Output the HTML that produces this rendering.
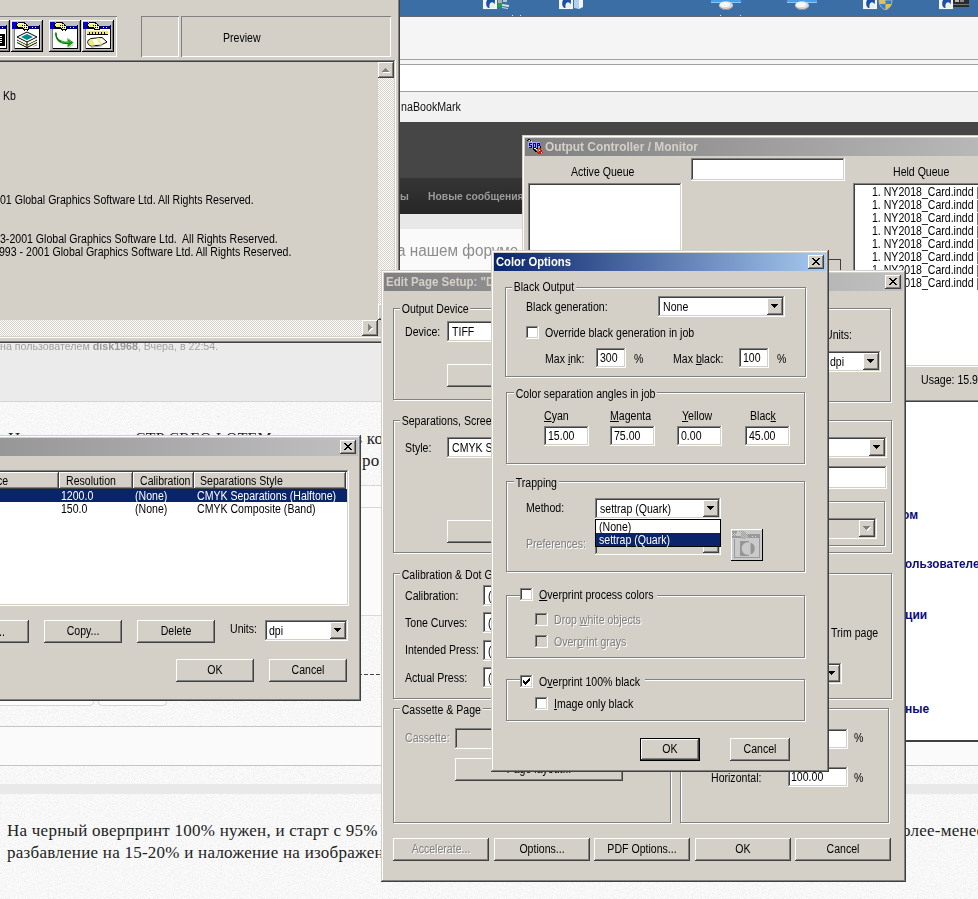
<!DOCTYPE html>
<html><head><meta charset="utf-8"><title>Color Options</title><style>
*{box-sizing:border-box}
html,body{margin:0;padding:0}
body{width:978px;height:899px;overflow:hidden;position:relative;background:#fcfcfc;font-family:"Liberation Sans",sans-serif;color:#000}
div,span,svg{position:absolute}
.t{white-space:nowrap;font:12.5px/13px "Liberation Sans",sans-serif;transform:scaleX(.845);transform-origin:0 0;-webkit-text-stroke:0}
.t u{text-decoration-thickness:1px;text-underline-offset:1px}
.tc{transform-origin:50% 0}
.dis{color:#808080;-webkit-text-stroke:0;text-shadow:1.2px 1px 0 #fff}
.face{background:#d4d0c8}
.win{background:#d4d0c8;box-shadow:inset -1px -1px #404040,inset 1px 1px #d4d0c8,inset -2px -2px #808080,inset 2px 2px #fff}
.btn{background:#d4d0c8;box-shadow:inset -1px -1px #404040,inset 1px 1px #fff,inset -2px -2px #808080,inset 2px 2px #d4d0c8}
.sunk{background:#fff;box-shadow:inset -1px -1px #fff,inset 1px 1px #808080,inset -2px -2px #d4d0c8,inset 2px 2px #404040}
.grp{border:1px solid #808080;box-shadow:1px 1px 0 #fff,inset 1px 1px 0 #fff}
.ttl{height:18px;color:#fff;overflow:hidden}
.ttl b{position:absolute;white-space:nowrap;font:bold 13px/18px "Liberation Sans",sans-serif;transform-origin:0 0;left:2px;top:0}
.act{background:linear-gradient(90deg,#0a246a,#a6caf0)}
.chk{width:13px;height:13px}
.sel{background:#0a246a}
.w{color:#fff;-webkit-text-stroke:0}
.ck{background:conic-gradient(#fff 25%,#d4d0c8 0 50%,#fff 0 75%,#d4d0c8 0) 0 0/2px 2px}
</style></head>
<body>
<svg style="left:0;top:0" width="978" height="899"><filter id="nz" x="0" y="0" width="100%" height="100%"><feTurbulence type="fractalNoise" baseFrequency=".75" numOctaves="2" seed="7"/><feColorMatrix values="0 0 0 0 0 0 0 0 0 0 0 0 0 0 0 .15 0 0 0 -.058"/></filter><rect width="978" height="899" filter="url(#nz)"/></svg>
<div style="left:400px;top:0px;width:578px;height:16px;background:#3a6ea5"></div>
<div style="left:400px;top:16px;width:578px;height:1px;background:#646a72"></div>
<div style="left:400px;top:17px;width:578px;height:105px;background:#f5f5f5"></div>
<div style="left:400px;top:59px;width:578px;height:1px;background:#a0a0a0"></div>
<div style="left:400px;top:64px;width:578px;height:1px;background:#a0a0a0"></div>
<div style="left:400px;top:65px;width:578px;height:26px;background:#fff"></div>
<div style="left:400px;top:91px;width:578px;height:1px;background:#a0a0a0"></div>
<div style="left:400px;top:92px;width:578px;height:30px;background:#f2f2f2"></div>
<div style="left:400px;top:122px;width:578px;height:56px;background:#464646"></div>
<div style="left:400px;top:178px;width:578px;height:36px;background:linear-gradient(#353535,#262626)"></div>
<div style="left:400px;top:214px;width:578px;height:15px;background:#e8e8e8"></div>
<div style="left:400px;top:229px;width:578px;height:60px;background:#fafafa"></div>
<span style="left:400.5px;top:101.14px;white-space:nowrap;font:normal 12px/12px 'Liberation Sans',sans-serif;color:#111;transform:scaleX(0.89);transform-origin:0 0;">naBookMark</span>
<span style="left:400px;top:191.27px;white-space:nowrap;font:bold 11.5px/11.5px 'Liberation Sans',sans-serif;color:#9b9b9b;transform:scaleX(0.9);transform-origin:0 0;">ы</span>
<span style="left:428px;top:191.27px;white-space:nowrap;font:bold 11.5px/11.5px 'Liberation Sans',sans-serif;color:#9b9b9b;transform:scaleX(0.9);transform-origin:0 0;">Новые сообщения</span>
<span style="left:397.3px;top:242.83px;white-space:nowrap;font:normal 15.8px/15.8px 'Liberation Sans',sans-serif;color:#8c8c8c;transform:scaleX(0.97);transform-origin:0 0;">а нашем форуме</span>
<svg style="left:483px;top:0" width="15" height="10"><rect width="14" height="9" fill="#f3f6f8"/><rect y="9" width="14.500" height="1" fill="#5d7896" opacity=".55"/><path d="M5.500 8C3 7 2.500 3 4 0h8l-.3 4.200-1.200-1.200C9 1.500 7.500 2.500 6.800 4 6.300 5.500 6.200 7 6.800 7.800z" fill="#1d4fa6"/><path d="M6.800 8c.2-2 1.500-4 3.800-4.500l1 1V8z" fill="#e4efe6"/></svg>
<svg style="left:497px;top:0" width="13" height="10"><rect x="1" y="0" width="4" height="3" fill="#9fb4a8"/><rect x="1" y="3" width="4" height="4" fill="#19a34a"/><path d="M5 4l7 1v2l-7-1zM5 7l6 1v1l-6-1z" fill="#d9dde0"/><path d="M6 0h4v2h-4z" fill="#b8c4cf"/></svg>
<svg style="left:559px;top:0" width="15" height="10"><rect width="14" height="9" fill="#f3f6f8"/><rect y="9" width="14.500" height="1" fill="#5d7896" opacity=".55"/><path d="M5.500 8C3 7 2.500 3 4 0h8l-.3 4.200-1.200-1.200C9 1.500 7.500 2.500 6.800 4 6.300 5.500 6.200 7 6.800 7.800z" fill="#1d4fa6"/><path d="M6.800 8c.2-2 1.500-4 3.800-4.500l1 1V8z" fill="#e4efe6"/></svg>
<svg style="left:573px;top:0" width="12" height="10"><path d="M1 0h5v9l-5-1z" fill="#b4d0f0"/><path d="M6 0h4v7l-4 2z" fill="#f2f6fb"/></svg>
<svg style="left:711px;top:0" width="30" height="11"><rect width="30" height="3" fill="#4aa0e8"/><rect y="2" width="30" height="1" fill="#8cc6f4"/><ellipse cx="15" cy="5.5" rx="7" ry="4.2" fill="#d8d8d8"/><ellipse cx="14" cy="4.5" rx="5" ry="2.6" fill="#f7f7f7"/><path d="M8.5 7a7 4 0 0 0 13 0" fill="none" stroke="#8a8f96" stroke-width="1"/></svg>
<svg style="left:787px;top:0" width="30" height="11"><rect width="30" height="3" fill="#4aa0e8"/><rect y="2" width="30" height="1" fill="#8cc6f4"/><ellipse cx="15" cy="5.5" rx="7" ry="4.2" fill="#d8d8d8"/><ellipse cx="14" cy="4.5" rx="5" ry="2.6" fill="#f7f7f7"/><path d="M8.5 7a7 4 0 0 0 13 0" fill="none" stroke="#8a8f96" stroke-width="1"/></svg>
<svg style="left:863px;top:0" width="15" height="10"><rect width="14" height="9" fill="#f3f6f8"/><rect y="9" width="14.500" height="1" fill="#5d7896" opacity=".55"/><path d="M5.500 8C3 7 2.500 3 4 0h8l-.3 4.200-1.200-1.200C9 1.500 7.500 2.500 6.800 4 6.300 5.500 6.200 7 6.800 7.800z" fill="#1d4fa6"/><path d="M6.800 8c.2-2 1.500-4 3.800-4.500l1 1V8z" fill="#e4efe6"/></svg>
<svg style="left:878px;top:0" width="15" height="10"><path d="M1 0h13c0 5-2 8-6.5 10C3 8 1 5 1 0z" fill="#e8c23a"/><path d="M7.5 0h6.5c0 1.500-.2 3-.6 4H7.500zM1.600 4h5.900v6C4 8.500 2.300 6.500 1.600 4z" fill="#2f7fd6"/><path d="M1 0h13c0 5-2 8-6.5 10C3 8 1 5 1 0z" fill="none" stroke="#b9bec4" stroke-width=".8"/></svg>
<svg style="left:939px;top:0" width="15" height="10"><rect width="14" height="9" fill="#f3f6f8"/><rect y="9" width="14.500" height="1" fill="#5d7896" opacity=".55"/><path d="M5.500 8C3 7 2.500 3 4 0h8l-.3 4.200-1.200-1.200C9 1.500 7.500 2.500 6.800 4 6.300 5.500 6.200 7 6.800 7.800z" fill="#1d4fa6"/><path d="M6.800 8c.2-2 1.500-4 3.800-4.500l1 1V8z" fill="#e4efe6"/></svg>
<svg style="left:953px;top:0" width="17" height="8"><rect width="16" height="7" fill="#2b2b2b"/><rect x="2" y="0" width="4" height="2" fill="#bdbdbd"/><rect x="7" y="0" width="4" height="2" fill="#8c8c8c"/><rect x="0" y="4" width="16" height="1" fill="#777"/></svg>
<div style="left:512px;top:15px;width:1px;height:1px;background:#e8eef5"></div>
<div style="left:520px;top:15px;width:1px;height:1px;background:#e8eef5"></div>
<div style="left:720px;top:15px;width:1px;height:1px;background:#e8eef5"></div>
<div style="left:740px;top:15px;width:1px;height:1px;background:#e8eef5"></div>
<div style="left:0px;top:343px;width:400px;height:58px;background:#ebebeb"></div>
<div style="left:0px;top:343px;width:400px;height:1px;background:#f1f1f4"></div>
<div style="left:0px;top:401px;width:400px;height:1px;background:#d4d4d4"></div>
<span style="left:0;top:339.5px;white-space:nowrap;font:11px/13px 'Liberation Sans',sans-serif;color:#a2a2a2;transform:scaleX(.97);transform-origin:0 0">на пользователем <b style="color:#9a9a9a">disk1968</b>, Вчера, в 22:54.</span>
<span style="left:8px;top:429.76px;white-space:nowrap;font:normal 17px/17px 'Liberation Serif',serif;color:#222;">Н</span>
<span style="left:135px;top:429.76px;white-space:nowrap;font:normal 17px/17px 'Liberation Serif',serif;color:#222;transform:scaleX(0.935);transform-origin:0 0;letter-spacing:.25px">CTP CREO LOTEM</span>
<span style="left:361px;top:429.76px;white-space:nowrap;font:normal 17px/17px 'Liberation Serif',serif;color:#222;letter-spacing:.25px;margin-left:-7px">в ко</span>
<span style="left:362px;top:451.76px;white-space:nowrap;font:normal 17px/17px 'Liberation Serif',serif;color:#222;letter-spacing:.25px">ро</span>
<div style="left:340px;top:485px;width:60px;height:131px;background:#fbfbfb;border-top:1px solid #d6d6d6;border-bottom:1px solid #dadada"></div>
<div style="left:340px;top:507px;width:60px;height:1px;background:#d6d6d6"></div>
<div style="left:340px;top:674px;width:41px;height:1px;background:repeating-linear-gradient(90deg,#444 0 4px,transparent 4px 6px)"></div>
<div style="left:-5px;top:690px;width:99px;height:16px;background:#fcfcfc;border:1px solid #d5d5d5;border-radius:4px"></div>
<div style="left:98px;top:690px;width:69px;height:16px;background:#fcfcfc;border:1px solid #d5d5d5;border-radius:4px"></div>
<div style="left:0px;top:726px;width:978px;height:40px;background:#fafafa;border-top:1px solid #c4c4c4;border-bottom:1px solid #c4c4c4"></div>
<div style="left:0px;top:784px;width:978px;height:10px;background:#e9e9e9"></div>
<span style="left:7px;top:821.76px;white-space:nowrap;font:normal 17px/17px 'Liberation Serif',serif;color:#222;letter-spacing:.25px">На черный оверпринт 100% нужен, и старт с 95% К</span>
<span style="left:7px;top:844.26px;white-space:nowrap;font:normal 17px/17px 'Liberation Serif',serif;color:#222;letter-spacing:.25px">разбавление на 15-20% и наложение на изображение</span>
<span style="left:893px;top:821.76px;white-space:nowrap;font:normal 17px/17px 'Liberation Serif',serif;color:#222;letter-spacing:.25px">более-менее</span>
<div class="win" style="left:-10px;top:-30px;width:410px;height:373px;"></div>
<div style="left:-10px;top:16px;width:127px;height:41px;box-shadow:inset 1px 1px #808080,inset -1px -1px #fff"></div>
<div style="left:141px;top:16px;width:38px;height:41px;box-shadow:inset 1px 1px #808080,inset -1px -1px #fff"></div>
<div style="left:181px;top:16px;width:210px;height:41px;box-shadow:inset 1px 1px #808080,inset -1px -1px #fff"></div>
<span class="t " style="left:223px;top:32px;">Preview</span>
<svg style="left:-22px;top:20px" width="32" height="32" shape-rendering="crispEdges"><defs><pattern id="hz" width="2" height="2" patternUnits="userSpaceOnUse"><rect width="2" height="2" fill="#f4f080"/><rect width="1" height="1" fill="#fff"/><rect x="1" y="1" width="1" height="1" fill="#000"/></pattern></defs><rect width="32" height="32" fill="#c0c0c0"/><path d="M0 0h31v1h-30v30h-1z" fill="#fff"/><path d="M31 0h1v32h-32v-1h31z" fill="#000"/><path d="M30 1h1v30h-30v-1h29z" fill="#808080"/><rect x="4" y="9" width="24" height="19" fill="#fff"/><path d="M28 5h1v24h-25v-1h24z" fill="#000"/><path d="M3 9h1v20h-1z" fill="#808080"/><rect x="1" y="2" width="5" height="7" fill="#0000d0"/><rect x="6" y="6" width="22" height="3" fill="#000080"/><rect x="21" y="7" width="1" height="1" fill="#fff"/><rect x="24" y="7" width="1" height="1" fill="#fff"/><path d="M5 4l2-2h6l2 2 2 2 1 2v2h-1v1h-1v-1h-2l-1 1-1-1-1-1h-5l-1-1z" fill="#000"/><path d="M6 4l1-1h5l1 1-1 3h-5l-1-1z" fill="#f4f080"/><path d="M7 3h4v1h-4z" fill="#fffbd0"/><path d="M12 3h2l3 4v2h-3l-3-2z" fill="url(#hz)"/><rect x="20" y="14" width="7" height="12" fill="#000"/><path d="M20 16h4v1h-4zM20 18h4v1h-4zM20 20h4v1h-4zM20 22h4v1h-4z" fill="#fff"/></svg>
<svg style="left:11px;top:20px" width="32" height="32" shape-rendering="crispEdges"><defs><pattern id="hz" width="2" height="2" patternUnits="userSpaceOnUse"><rect width="2" height="2" fill="#f4f080"/><rect width="1" height="1" fill="#fff"/><rect x="1" y="1" width="1" height="1" fill="#000"/></pattern></defs><rect width="32" height="32" fill="#c0c0c0"/><path d="M0 0h31v1h-30v30h-1z" fill="#fff"/><path d="M31 0h1v32h-32v-1h31z" fill="#000"/><path d="M30 1h1v30h-30v-1h29z" fill="#808080"/><rect x="4" y="9" width="24" height="19" fill="#fff"/><path d="M28 5h1v24h-25v-1h24z" fill="#000"/><path d="M3 9h1v20h-1z" fill="#808080"/><rect x="1" y="2" width="5" height="7" fill="#0000d0"/><rect x="6" y="6" width="22" height="3" fill="#000080"/><rect x="21" y="7" width="1" height="1" fill="#fff"/><rect x="24" y="7" width="1" height="1" fill="#fff"/><path d="M5 4l2-2h6l2 2 2 2 1 2v2h-1v1h-1v-1h-2l-1 1-1-1-1-1h-5l-1-1z" fill="#000"/><path d="M6 4l1-1h5l1 1-1 3h-5l-1-1z" fill="#f4f080"/><path d="M7 3h4v1h-4z" fill="#fffbd0"/><path d="M12 3h2l3 4v2h-3l-3-2z" fill="url(#hz)"/><g shape-rendering="auto"><path d="M6 17l10-5 10 5-10 5z" fill="#fff" stroke="#000"/><path d="M6 20l10 5 10-5" fill="none" stroke="#000"/><path d="M6 22.500l10 5 10-5" fill="none" stroke="#000"/><path d="M7 18.500l9 4.500 9-4.500v1.500l-9 4.500-9-4.500z" fill="#fff"/><path d="M7 21l9 4.500 9-4.500v1l-9 4.500-9-4.500z" fill="#f0ec70"/><path d="M10 17l6-3 6 3-6 3z" fill="#008c8c"/><path d="M16 22v6" stroke="#000"/><path d="M21 27l5-1v-2z" fill="#b0b0b0"/></g></svg>
<svg style="left:49px;top:20px" width="32" height="32" shape-rendering="crispEdges"><defs><pattern id="hz" width="2" height="2" patternUnits="userSpaceOnUse"><rect width="2" height="2" fill="#f4f080"/><rect width="1" height="1" fill="#fff"/><rect x="1" y="1" width="1" height="1" fill="#000"/></pattern></defs><rect width="32" height="32" fill="#c0c0c0"/><path d="M0 0h31v1h-30v30h-1z" fill="#fff"/><path d="M31 0h1v32h-32v-1h31z" fill="#000"/><path d="M30 1h1v30h-30v-1h29z" fill="#808080"/><rect x="4" y="9" width="24" height="19" fill="#fff"/><path d="M28 5h1v24h-25v-1h24z" fill="#000"/><path d="M3 9h1v20h-1z" fill="#808080"/><rect x="1" y="2" width="5" height="7" fill="#0000d0"/><rect x="6" y="6" width="22" height="3" fill="#000080"/><rect x="21" y="7" width="1" height="1" fill="#fff"/><rect x="24" y="7" width="1" height="1" fill="#fff"/><path d="M5 4l2-2h6l2 2 2 2 1 2v2h-1v1h-1v-1h-2l-1 1-1-1-1-1h-5l-1-1z" fill="#000"/><path d="M6 4l1-1h5l1 1-1 3h-5l-1-1z" fill="#f4f080"/><path d="M7 3h4v1h-4z" fill="#fffbd0"/><path d="M12 3h2l3 4v2h-3l-3-2z" fill="url(#hz)"/><g shape-rendering="auto"><path d="M7.500 12.500c0 6.500 4 9 11 9v-3.500l6 4.500-6 5V24c-9 0-12.500-4.500-12.500-11.500z" fill="#109a10"/><path d="M7 13c0 7 4 10.500 11.500 10.500" fill="none" stroke="#086808" stroke-width="1"/><path d="M12.500 22h8M19.500 19.500l3 2.500" stroke="#a8f0a8" stroke-width="1" stroke-dasharray="1 1"/><path d="M19 27.500l5-3.500 1 1-5 3z" fill="#c8c8c8"/></g></svg>
<svg style="left:82px;top:20px" width="32" height="32" shape-rendering="crispEdges"><defs><pattern id="hz" width="2" height="2" patternUnits="userSpaceOnUse"><rect width="2" height="2" fill="#f4f080"/><rect width="1" height="1" fill="#fff"/><rect x="1" y="1" width="1" height="1" fill="#000"/></pattern></defs><rect width="32" height="32" fill="#c0c0c0"/><path d="M0 0h31v1h-30v30h-1z" fill="#fff"/><path d="M31 0h1v32h-32v-1h31z" fill="#000"/><path d="M30 1h1v30h-30v-1h29z" fill="#808080"/><rect x="4" y="9" width="24" height="19" fill="#fff"/><path d="M28 5h1v24h-25v-1h24z" fill="#000"/><path d="M3 9h1v20h-1z" fill="#808080"/><rect x="1" y="2" width="5" height="7" fill="#0000d0"/><rect x="6" y="6" width="22" height="3" fill="#000080"/><rect x="21" y="7" width="1" height="1" fill="#fff"/><rect x="24" y="7" width="1" height="1" fill="#fff"/><path d="M5 4l2-2h6l2 2 2 2 1 2v2h-1v1h-1v-1h-2l-1 1-1-1-1-1h-5l-1-1z" fill="#000"/><path d="M6 4l1-1h5l1 1-1 3h-5l-1-1z" fill="#f4f080"/><path d="M7 3h4v1h-4z" fill="#fffbd0"/><path d="M12 3h2l3 4v2h-3l-3-2z" fill="url(#hz)"/><rect x="5" y="10" width="21" height="5" fill="#f4ec50"/><path d="M5 10h21v1h-21z" fill="#fffbd0"/><path d="M5 14h21v1h-21z" fill="#000"/><path d="M7 12h1v2h-1zM10 12h1v2h-1zM13 12h1v2h-1zM16 12h1v2h-1zM19 12h1v2h-1zM22 12h1v2h-1z" fill="#000"/><g shape-rendering="auto"><path d="M6 20.500L9 18.500 20 17.500 25 22 19 25 10 26C7 26 5 23.500 6 20.500z" fill="#fff" stroke="#000" stroke-width="1"/><path d="M7 20l3-1.200 3 6.500-3.500.4c-2-.5-3-3-2.500-5.700z" fill="#f0ec70"/><path d="M14.500 18.300l3-.3 3 6.200-3 .8z" fill="#f4f08a"/><path d="M9 27.300l11-1.500" stroke="#a0a0a0"/></g></svg>
<div class="sunk" style="left:-10px;top:60px;width:406px;height:278px;background:#d4d0c8"></div>
<span class="t " style="left:3px;top:90px;">Kb</span>
<span class="t " style="left:0px;top:194px;margin-left:-0.5px">01 Global Graphics Software Ltd. All Rights Reserved.</span>
<span class="t " style="left:0px;top:233px;">3-2001 Global Graphics Software Ltd.&nbsp; All Rights Reserved.</span>
<span class="t " style="left:0px;top:246px;margin-left:-1px">993 - 2001 Global Graphics Software Ltd. All Rights Reserved.</span>
<div class="ck" style="left:378px;top:62px;width:16px;height:258px;"></div>
<div class="btn" style="left:378px;top:62px;width:16px;height:16px;"></div>
<div class="btn" style="left:378px;top:304px;width:16px;height:16px;"></div>
<svg style="left:383px;top:69px" width="7" height="4" shape-rendering="crispEdges"><path d="M3 0h1v1h-1zM2 1h3v1h-3zM1 2h5v1h-5zM0 3h7v1h-7z" fill="#fff"/></svg>
<svg style="left:382px;top:68px" width="7" height="4" shape-rendering="crispEdges"><path d="M3 0h1v1h-1zM2 1h3v1h-3zM1 2h5v1h-5zM0 3h7v1h-7z" fill="#808080"/></svg>
<svg style="left:383px;top:311px" width="7" height="4" shape-rendering="crispEdges"><path d="M0 0h7v1h-7zM1 1h5v1h-5zM2 2h3v1h-3zM3 3h1v1h-1z" fill="#fff"/></svg>
<svg style="left:382px;top:310px" width="7" height="4" shape-rendering="crispEdges"><path d="M0 0h7v1h-7zM1 1h5v1h-5zM2 2h3v1h-3zM3 3h1v1h-1z" fill="#808080"/></svg>
<div class="ck" style="left:-10px;top:320px;width:388px;height:16px;"></div>
<div class="btn" style="left:362px;top:320px;width:16px;height:16px;"></div>
<svg style="left:369px;top:325px" width="4" height="7" shape-rendering="crispEdges"><path d="M0 0h1v7h-1zM1 1h1v5h-1zM2 2h1v3h-1zM3 3h1v1h-1z" fill="#fff"/></svg>
<svg style="left:368px;top:324px" width="4" height="7" shape-rendering="crispEdges"><path d="M0 0h1v7h-1zM1 1h1v5h-1zM2 2h1v3h-1zM3 3h1v1h-1z" fill="#808080"/></svg>
<div class="face" style="left:378px;top:320px;width:16px;height:16px;"></div>
<div class="win" style="left:522px;top:135px;width:480px;height:267px;"></div>
<div class="ttl" style="left:525px;top:138px;width:475px;background:linear-gradient(90deg,#808080,#c0c0c0 520px);color:#d4d0c8"><b style="left:20px;transform:scaleX(.917)">Output Controller / Monitor</b></div>
<svg style="left:527px;top:139px" width="16" height="16" shape-rendering="crispEdges"><path d="M1 0h2v1h-2zM0 1h1v1h-1zM3 1h1v1h1v1h-1v-1h-1z" fill="#000"/><path d="M2 1h1v1h-1zM4 2h1v1h1v1h-1z" fill="#fff"/><rect x="1" y="3" width="12" height="6" fill="#a8a8f0"/><path d="M2 4h3v1h-2v1h2v3h-3v-1h2v-1h-2zM6 4h3v5h-3zM10 4h3v3h-2v2h-1z" fill="#0000c0"/><rect x="7" y="5" width="1" height="3" fill="#a8a8f0"/><rect x="11" y="5" width="1" height="1" fill="#a8a8f0"/><path d="M6 9h1v1h1v1h1v1h1v1h-2v-1h-1v-1h-1zM13 7h1v2h-1zM9 9h2v1h-2z" fill="#000"/><path d="M7 9h2v1h1v1h-1v-1h-2z" fill="#fff"/><path d="M12 9h2v2h1v2h1v1h-2v1h-3v-1h-1v-1h2v-2h1z" fill="#e01010"/><rect x="12" y="11" width="1" height="1" fill="#f8e060"/><rect x="14" y="13" width="1" height="1" fill="#fff"/></svg>
<span class="t " style="left:571px;top:166px;">Active Queue</span>
<div class="sunk" style="left:528px;top:183px;width:154px;height:184px;"></div>
<div class="sunk" style="left:691px;top:158px;width:154px;height:23px;"></div>
<span class="t " style="left:893px;top:166px;">Held Queue</span>
<div class="sunk" style="left:853px;top:183px;width:140px;height:184px;"></div>
<span class="t " style="left:872px;top:186px;margin-left:-.5px">1. NY2018_Card.indd&nbsp;|</span>
<span class="t " style="left:872px;top:199px;margin-left:-.5px">1. NY2018_Card.indd&nbsp;|</span>
<span class="t " style="left:872px;top:212px;margin-left:-.5px">1. NY2018_Card.indd&nbsp;|</span>
<span class="t " style="left:872px;top:225px;margin-left:-.5px">1. NY2018_Card.indd&nbsp;|</span>
<span class="t " style="left:872px;top:238px;margin-left:-.5px">1. NY2018_Card.indd&nbsp;|</span>
<span class="t " style="left:872px;top:251px;margin-left:-.5px">1. NY2018_Card.indd&nbsp;|</span>
<span class="t " style="left:872px;top:264px;margin-left:-.5px">1. NY2018_Card.indd&nbsp;|</span>
<span class="t " style="left:872px;top:277px;margin-left:-.5px">1. NY2018_Card.indd&nbsp;|</span>
<div style="left:700px;top:259px;width:141px;height:60px;border:1px solid #404040"></div>
<span class="t " style="left:921px;top:374px;">Usage: 15.9%</span>
<div style="left:880px;top:402px;width:110px;height:340px;background:#fff;border-bottom:2px solid #404040"></div>
<span style="left:902px;top:508.64px;white-space:nowrap;font:bold 12px/12px 'Liberation Sans',sans-serif;color:#0c0c7c;">ом</span>
<span style="left:905px;top:558.24px;white-space:nowrap;font:bold 12px/12px 'Liberation Sans',sans-serif;color:#0c0c7c;transform:scaleX(0.985);transform-origin:0 0;">ользователей</span>
<span style="left:905px;top:608.64px;white-space:nowrap;font:bold 12px/12px 'Liberation Sans',sans-serif;color:#0c0c7c;">ции</span>
<span style="left:905px;top:702.64px;white-space:nowrap;font:bold 12px/12px 'Liberation Sans',sans-serif;color:#0c0c7c;">ные</span>
<div class="win" style="left:-200px;top:435px;width:561px;height:266px;"></div>
<div class="ttl" style="left:-197px;top:438px;width:555px;background:linear-gradient(90deg,#808080,#c0c0c0)"></div>
<div class="btn" style="left:340px;top:440px;width:16px;height:14px;"></div>
<svg style="left:344px;top:443px" width="8" height="7" shape-rendering="crispEdges"><path d="M0 0h2v1h-2zM6 0h2v1h-2zM1 1h2v1h-2zM5 1h2v1h-2zM2 2h4v1h-4zM3 3h2v1h-2zM2 4h4v1h-4zM1 5h2v1h-2zM5 5h2v1h-2zM0 6h2v1h-2zM6 6h2v1h-2z" fill="#000"/></svg>
<div class="sunk" style="left:-190px;top:470px;width:539px;height:136px;"></div>
<div style="left:-188px;top:472px;width:247px;height:17px;background:#d4d0c8;box-shadow:inset -1px -1px #404040,inset 1px 1px #fff,inset -2px -2px #808080"></div>
<span class="t " style="left:-3.5px;top:475px;">ce</span>
<div style="left:59px;top:472px;width:74px;height:17px;background:#d4d0c8;box-shadow:inset -1px -1px #404040,inset 1px 1px #fff,inset -2px -2px #808080"></div>
<span class="t " style="left:66px;top:475px;">Resolution</span>
<div style="left:133px;top:472px;width:61px;height:17px;background:#d4d0c8;box-shadow:inset -1px -1px #404040,inset 1px 1px #fff,inset -2px -2px #808080"></div>
<span class="t " style="left:140px;top:475px;">Calibration</span>
<div style="left:194px;top:472px;width:152px;height:17px;background:#d4d0c8;box-shadow:inset -1px -1px #404040,inset 1px 1px #fff,inset -2px -2px #808080"></div>
<span class="t " style="left:200px;top:475px;">Separations Style</span>
<div class="sel" style="left:-188px;top:489px;width:535px;height:13px;"></div>
<span class="t w" style="left:62px;top:490px;margin-left:-1px">1200.0</span>
<span class="t w" style="left:135px;top:490px;">(None)</span>
<span class="t w" style="left:197px;top:490px;margin-left:-.5px">CMYK Separations (Halftone)</span>
<span class="t " style="left:62px;top:503px;margin-left:-1px">150.0</span>
<span class="t " style="left:135px;top:503px;">(None)</span>
<span class="t " style="left:197px;top:503px;margin-left:-.5px">CMYK Composite (Band)</span>
<div class="btn" style="left:-49px;top:620px;width:78px;height:23px;"></div>
<span class="t " style="left:-1px;top:626px;">..</span>
<div class="btn" style="left:44px;top:620px;width:78px;height:23px;"></div>
<span class="t tc " style="left:44px;width:78px;text-align:center;top:625px;">Copy...</span>
<div class="btn" style="left:137px;top:620px;width:78px;height:23px;"></div>
<span class="t tc " style="left:137px;width:78px;text-align:center;top:625px;">Delete</span>
<span class="t " style="left:230px;top:623px;">Units:</span>
<div class="sunk" style="left:265px;top:620px;width:83px;height:21px;background:#fff"></div>
<div class="btn" style="left:330px;top:622px;width:16px;height:17px;"></div>
<svg style="left:334px;top:628px" width="7" height="4" shape-rendering="crispEdges"><path d="M0 0h7v1h-7zM1 1h5v1h-5zM2 2h3v1h-3zM3 3h1v1h-1z" fill="#000"/></svg>
<span class="t " style="left:269px;top:625px;">dpi</span>
<div class="btn" style="left:176px;top:659px;width:78px;height:23px;"></div>
<span class="t tc " style="left:176px;width:78px;text-align:center;top:664px;">OK</span>
<div class="btn" style="left:269px;top:659px;width:78px;height:23px;"></div>
<span class="t tc " style="left:269px;width:78px;text-align:center;top:664px;">Cancel</span>
<div class="win" style="left:381px;top:270px;width:525px;height:612px;"></div>
<div class="ttl" style="left:384px;top:273px;width:519px;background:linear-gradient(90deg,#808080,#c0c0c0);color:#d4d0c8"><b style="left:2px;transform:scaleX(.885)">Edit Page Setup: "Default Page Setup"</b></div>
<div class="btn" style="left:885px;top:275px;width:16px;height:14px;"></div>
<svg style="left:889px;top:278px" width="8" height="7" shape-rendering="crispEdges"><path d="M0 0h2v1h-2zM6 0h2v1h-2zM1 1h2v1h-2zM5 1h2v1h-2zM2 2h4v1h-4zM3 3h2v1h-2zM2 4h4v1h-4zM1 5h2v1h-2zM5 5h2v1h-2zM0 6h2v1h-2zM6 6h2v1h-2z" fill="#000"/></svg>
<div class="grp" style="left:393px;top:308px;width:299px;height:92px;"></div>
<span class="t " style="left:402px;top:303px;background:#d4d0c8;padding:0 2px;margin-left:-1.7px">Output Device</span>
<div class="grp" style="left:700px;top:308px;width:191px;height:94px;"></div>
<span class="t " style="left:405px;top:326px;">Device:</span>
<div class="sunk" style="left:447px;top:321px;width:200px;height:21px;background:#fff"></div>
<div class="btn" style="left:629px;top:323px;width:16px;height:17px;"></div>
<svg style="left:633px;top:329px" width="7" height="4" shape-rendering="crispEdges"><path d="M0 0h7v1h-7zM1 1h5v1h-5zM2 2h3v1h-3zM3 3h1v1h-1z" fill="#000"/></svg>
<span class="t " style="left:452px;top:326px;">TIFF</span>
<div class="btn" style="left:447px;top:364px;width:180px;height:23px;"></div>
<span class="t " style="left:825px;top:329px;">Units:</span>
<div class="sunk" style="left:825px;top:351px;width:56px;height:21px;background:#fff"></div>
<div class="btn" style="left:863px;top:353px;width:16px;height:17px;"></div>
<svg style="left:867px;top:359px" width="7" height="4" shape-rendering="crispEdges"><path d="M0 0h7v1h-7zM1 1h5v1h-5zM2 2h3v1h-3zM3 3h1v1h-1z" fill="#000"/></svg>
<span class="t " style="left:830px;top:356px;">dpi</span>
<div class="grp" style="left:393px;top:420px;width:499px;height:133px;"></div>
<span class="t " style="left:402px;top:415px;background:#d4d0c8;padding:0 2px;margin-left:-1.7px">Separations, Screening &amp; Color</span>
<span class="t " style="left:405px;top:442px;">Style:</span>
<div class="sunk" style="left:447px;top:437px;width:440px;height:21px;background:#fff"></div>
<div class="btn" style="left:869px;top:439px;width:16px;height:17px;"></div>
<svg style="left:873px;top:445px" width="7" height="4" shape-rendering="crispEdges"><path d="M0 0h7v1h-7zM1 1h5v1h-5zM2 2h3v1h-3zM3 3h1v1h-1z" fill="#000"/></svg>
<span class="t " style="left:452px;top:442px;">CMYK Separations (Halftone)</span>
<div class="sunk" style="left:600px;top:466px;width:287px;height:23px;"></div>
<div class="btn" style="left:447px;top:520px;width:180px;height:23px;"></div>
<div class="grp" style="left:600px;top:501px;width:285px;height:45px;"></div>
<div class="sunk" style="left:600px;top:518px;width:277px;height:21px;background:#d4d0c8"></div>
<div class="btn" style="left:859px;top:520px;width:16px;height:17px;"></div>
<svg style="left:864px;top:527px" width="7" height="4" shape-rendering="crispEdges"><path d="M0 0h7v1h-7zM1 1h5v1h-5zM2 2h3v1h-3zM3 3h1v1h-1z" fill="#fff"/></svg>
<svg style="left:863px;top:526px" width="7" height="4" shape-rendering="crispEdges"><path d="M0 0h7v1h-7zM1 1h5v1h-5zM2 2h3v1h-3zM3 3h1v1h-1z" fill="#808080"/></svg>
<div class="grp" style="left:393px;top:573px;width:499px;height:126px;"></div>
<span class="t " style="left:402px;top:569px;background:#d4d0c8;padding:0 2px;margin-left:-1.7px">Calibration &amp; Dot Gain</span>
<span class="t " style="left:404.5px;top:590px;">Calibration:</span>
<div class="sunk" style="left:483px;top:585px;width:200px;height:21px;background:#fff"></div>
<div class="btn" style="left:665px;top:587px;width:16px;height:17px;"></div>
<svg style="left:669px;top:593px" width="7" height="4" shape-rendering="crispEdges"><path d="M0 0h7v1h-7zM1 1h5v1h-5zM2 2h3v1h-3zM3 3h1v1h-1z" fill="#000"/></svg>
<span class="t " style="left:488px;top:590px;">(None)</span>
<span class="t " style="left:404.5px;top:617px;">Tone Curves:</span>
<div class="sunk" style="left:483px;top:612px;width:200px;height:21px;background:#fff"></div>
<div class="btn" style="left:665px;top:614px;width:16px;height:17px;"></div>
<svg style="left:669px;top:620px" width="7" height="4" shape-rendering="crispEdges"><path d="M0 0h7v1h-7zM1 1h5v1h-5zM2 2h3v1h-3zM3 3h1v1h-1z" fill="#000"/></svg>
<span class="t " style="left:488px;top:617px;">(None)</span>
<span class="t " style="left:404.5px;top:644px;">Intended Press:</span>
<div class="sunk" style="left:483px;top:640px;width:200px;height:21px;background:#fff"></div>
<div class="btn" style="left:665px;top:642px;width:16px;height:17px;"></div>
<svg style="left:669px;top:648px" width="7" height="4" shape-rendering="crispEdges"><path d="M0 0h7v1h-7zM1 1h5v1h-5zM2 2h3v1h-3zM3 3h1v1h-1z" fill="#000"/></svg>
<span class="t " style="left:488px;top:645px;">(None)</span>
<span class="t " style="left:404.5px;top:672px;">Actual Press:</span>
<div class="sunk" style="left:483px;top:667px;width:200px;height:21px;background:#fff"></div>
<div class="btn" style="left:665px;top:669px;width:16px;height:17px;"></div>
<svg style="left:669px;top:675px" width="7" height="4" shape-rendering="crispEdges"><path d="M0 0h7v1h-7zM1 1h5v1h-5zM2 2h3v1h-3zM3 3h1v1h-1z" fill="#000"/></svg>
<span class="t " style="left:488px;top:672px;">(None)</span>
<span class="t " style="left:831px;top:627px;">Trim page</span>
<div class="sunk" style="left:700px;top:663px;width:142px;height:21px;background:#fff"></div>
<div class="btn" style="left:824px;top:665px;width:16px;height:17px;"></div>
<svg style="left:828px;top:671px" width="7" height="4" shape-rendering="crispEdges"><path d="M0 0h7v1h-7zM1 1h5v1h-5zM2 2h3v1h-3zM3 3h1v1h-1z" fill="#000"/></svg>
<div class="grp" style="left:393px;top:708px;width:278px;height:115px;"></div>
<span class="t " style="left:402px;top:704px;background:#d4d0c8;padding:0 2px;margin-left:-1.7px">Cassette &amp; Page</span>
<span class="t dis" style="left:405px;top:732px;">Cassette:</span>
<div class="sunk" style="left:455px;top:728px;width:168px;height:21px;background:#d4d0c8"></div>
<div class="btn" style="left:455px;top:758px;width:168px;height:23px;"></div>
<span class="t tc " style="left:455px;width:168px;text-align:center;top:763px;">Page layout...</span>
<div class="grp" style="left:680px;top:708px;width:209px;height:115px;"></div>
<div class="sunk" style="left:788px;top:729px;width:60px;height:20px;"></div>
<span class="t " style="left:854px;top:732px;">%</span>
<span class="t " style="left:711px;top:772px;">Horizontal:</span>
<div class="sunk" style="left:788px;top:767px;width:60px;height:20px;"></div>
<span class="t " style="left:791px;top:771px;">100.00</span>
<span class="t " style="left:854px;top:772px;">%</span>
<div class="btn" style="left:393px;top:838px;width:96px;height:23px;"></div>
<span class="t tc dis" style="left:393px;width:96px;text-align:center;top:843px;">Accelerate...</span>
<div class="btn" style="left:494px;top:838px;width:96px;height:23px;"></div>
<span class="t tc " style="left:494px;width:96px;text-align:center;top:843px;">Options...</span>
<div class="btn" style="left:594px;top:838px;width:96px;height:23px;"></div>
<span class="t tc " style="left:594px;width:96px;text-align:center;top:843px;">PDF Options...</span>
<div class="btn" style="left:695px;top:838px;width:96px;height:23px;"></div>
<span class="t tc " style="left:695px;width:96px;text-align:center;top:843px;">OK</span>
<div class="btn" style="left:795px;top:838px;width:96px;height:23px;"></div>
<span class="t tc " style="left:795px;width:96px;text-align:center;top:843px;">Cancel</span>
<div class="win" style="left:491px;top:250px;width:338px;height:522px;"></div>
<div class="ttl act" style="left:494px;top:253px;width:332px"><b style="left:2px;transform:scaleX(.865)">Color Options</b></div>
<div class="btn" style="left:808px;top:255px;width:16px;height:14px;"></div>
<svg style="left:812px;top:258px" width="8" height="7" shape-rendering="crispEdges"><path d="M0 0h2v1h-2zM6 0h2v1h-2zM1 1h2v1h-2zM5 1h2v1h-2zM2 2h4v1h-4zM3 3h2v1h-2zM2 4h4v1h-4zM1 5h2v1h-2zM5 5h2v1h-2zM0 6h2v1h-2zM6 6h2v1h-2z" fill="#000"/></svg>
<div class="grp" style="left:505px;top:287px;width:301px;height:90px;"></div>
<span class="t " style="left:514px;top:281px;background:#d4d0c8;padding:0 2px;margin-left:-1.7px">Black Output</span>
<span class="t " style="left:526px;top:301px;">Black <u>g</u>eneration:</span>
<div class="sunk" style="left:658px;top:296px;width:127px;height:21px;background:#fff"></div>
<div class="btn" style="left:767px;top:298px;width:16px;height:17px;"></div>
<svg style="left:771px;top:304px" width="7" height="4" shape-rendering="crispEdges"><path d="M0 0h7v1h-7zM1 1h5v1h-5zM2 2h3v1h-3zM3 3h1v1h-1z" fill="#000"/></svg>
<span class="t " style="left:663px;top:301px;">None</span>
<div class="sunk" style="left:526px;top:326px;width:13px;height:13px;background:#fff"></div>
<span class="t " style="left:545px;top:327px;">Override black generation in job</span>
<span class="t " style="left:545px;top:353px;">Max <u>i</u>nk:</span>
<div class="sunk" style="left:596px;top:348px;width:30px;height:20px;background:#fff"></div>
<span class="t " style="left:600px;top:352px;">300</span>
<span class="t " style="left:634px;top:353px;">%</span>
<span class="t " style="left:673px;top:353px;">Max <u>b</u>lack:</span>
<div class="sunk" style="left:739px;top:348px;width:30px;height:20px;background:#fff"></div>
<span class="t " style="left:743px;top:352px;">100</span>
<span class="t " style="left:777px;top:353px;">%</span>
<div class="grp" style="left:506px;top:392px;width:299px;height:72px;"></div>
<span class="t " style="left:516px;top:388px;background:#d4d0c8;padding:0 2px;margin-left:-1.7px">Color separation angles in job</span>
<span class="t " style="left:544px;top:410px;"><u>C</u>yan</span>
<div class="sunk" style="left:544px;top:426px;width:45px;height:20px;background:#fff"></div>
<span class="t " style="left:548px;top:430px;">15.00</span>
<span class="t " style="left:610px;top:410px;"><u>M</u>agenta</span>
<div class="sunk" style="left:610px;top:426px;width:45px;height:20px;background:#fff"></div>
<span class="t " style="left:614px;top:430px;">75.00</span>
<span class="t " style="left:682px;top:410px;"><u>Y</u>ellow</span>
<div class="sunk" style="left:677px;top:426px;width:45px;height:20px;background:#fff"></div>
<span class="t " style="left:681px;top:430px;">0.00</span>
<span class="t " style="left:750px;top:410px;">Blac<u>k</u></span>
<div class="sunk" style="left:745px;top:426px;width:45px;height:20px;background:#fff"></div>
<span class="t " style="left:749px;top:430px;">45.00</span>
<div class="grp" style="left:506px;top:481px;width:299px;height:91px;"></div>
<span class="t " style="left:516px;top:477px;background:#d4d0c8;padding:0 2px;margin-left:-1.7px">Trapping</span>
<span class="t " style="left:526px;top:502px;">Method:</span>
<div class="sunk" style="left:595px;top:498px;width:126px;height:21px;background:#fff"></div>
<div class="btn" style="left:703px;top:500px;width:16px;height:17px;"></div>
<svg style="left:707px;top:506px" width="7" height="4" shape-rendering="crispEdges"><path d="M0 0h7v1h-7zM1 1h5v1h-5zM2 2h3v1h-3zM3 3h1v1h-1z" fill="#000"/></svg>
<span class="t " style="left:600px;top:503px;">settrap (Quark)</span>
<span class="t dis" style="left:526px;top:538px;">Preferences:</span>
<div class="sunk" style="left:595px;top:534px;width:126px;height:21px;background:#d4d0c8"></div>
<div class="btn" style="left:703px;top:536px;width:16px;height:17px;"></div>
<svg style="left:708px;top:543px" width="7" height="4" shape-rendering="crispEdges"><path d="M0 0h7v1h-7zM1 1h5v1h-5zM2 2h3v1h-3zM3 3h1v1h-1z" fill="#fff"/></svg>
<svg style="left:707px;top:542px" width="7" height="4" shape-rendering="crispEdges"><path d="M0 0h7v1h-7zM1 1h5v1h-5zM2 2h3v1h-3zM3 3h1v1h-1z" fill="#808080"/></svg>
<div style="left:595px;top:519px;width:126px;height:28px;background:#fff;border:1px solid #000"></div>
<span class="t " style="left:599px;top:521px;">(None)</span>
<div class="sel" style="left:596px;top:533px;width:124px;height:13px;"></div>
<span class="t w" style="left:599px;top:534px;">settrap (Quark)</span>
<svg style="left:731px;top:529px" width="32" height="32" shape-rendering="crispEdges"><defs><pattern id="dz" width="2" height="2" patternUnits="userSpaceOnUse"><rect width="2" height="2" fill="#cacaca"/><rect width="1" height="1" fill="#9a9a9a"/><rect x="1" y="1" width="1" height="1" fill="#9a9a9a"/></pattern></defs><rect width="32" height="32" fill="#cacaca"/><path d="M0 0h31v1h-30v30h-1z" fill="#fff"/><path d="M31 0h1v32h-32v-1h31z" fill="#000"/><path d="M3 10h1v18h24v-23h1v24h-26z" fill="#9a9a9a"/><rect x="17" y="5" width="12" height="4" fill="#9a9a9a"/><rect x="21" y="7" width="1" height="1" fill="#d8d8d8"/><rect x="24" y="7" width="1" height="1" fill="#d8d8d8"/><rect x="1" y="2" width="5" height="2" fill="#9a9a9a"/><rect x="1" y="4" width="4" height="5" fill="url(#dz)"/><rect x="1" y="7" width="16" height="2" fill="#9a9a9a"/><path d="M7 2h6v1h1v1h1v1h1v1h1v3h-2v1h-4v-2h-2v-2h-2z" fill="url(#dz)"/><path d="M6 3h4v3h-4z" fill="#cacaca"/><rect x="9" y="12" width="9" height="15" fill="#969696"/><g shape-rendering="auto"><circle cx="17" cy="19.500" r="6.300" fill="#cacaca"/><path d="M19.300 13.400a6.400 6.400 0 0 1 0 12.200z" fill="#969696"/><rect x="18" y="12" width="1.300" height="15" fill="#cacaca"/></g></svg>
<div class="grp" style="left:506px;top:595px;width:299px;height:63px;"></div>
<div class="face" style="left:533px;top:595px;width:124px;height:2px;"></div>
<div class="sunk" style="left:520px;top:588px;width:13px;height:13px;background:#fff"></div>
<span class="t " style="left:538.5px;top:589px;"><u>O</u>verprint process colors</span>
<div class="sunk" style="left:535px;top:613px;width:13px;height:13px;background:#d4d0c8"></div>
<span class="t dis" style="left:554px;top:614px;">Drop <u>w</u>hite objects</span>
<div class="sunk" style="left:535px;top:635px;width:13px;height:13px;background:#d4d0c8"></div>
<span class="t dis" style="left:554px;top:636px;">Over<u>p</u>rint grays</span>
<div class="grp" style="left:506px;top:679px;width:299px;height:42px;"></div>
<div class="face" style="left:533px;top:679px;width:112px;height:2px;"></div>
<div class="sunk" style="left:520px;top:675px;width:13px;height:13px;background:#fff"></div>
<svg style="left:523px;top:678px" width="7" height="7" shape-rendering="crispEdges"><path d="M0 2h1v3h-1zM1 3h1v3h-1zM2 4h1v3h-1zM3 3h1v3h-1zM4 2h1v3h-1zM5 1h1v3h-1zM6 0h1v3h-1z" fill="#000"/></svg>
<span class="t " style="left:538.5px;top:676px;">O<u>v</u>erprint 100% black</span>
<div class="sunk" style="left:535px;top:697px;width:13px;height:13px;background:#fff"></div>
<span class="t " style="left:553.5px;top:698px;"><u>I</u>mage only black</span>
<div style="left:640px;top:738px;width:60px;height:23px;background:#000"></div>
<div class="btn" style="left:641px;top:739px;width:58px;height:21px;"></div>
<span class="t tc " style="left:640px;width:60px;text-align:center;top:743px;">OK</span>
<div class="btn" style="left:730px;top:738px;width:60px;height:23px;"></div>
<span class="t tc " style="left:730px;width:60px;text-align:center;top:743px;">Cancel</span>
</body></html>
